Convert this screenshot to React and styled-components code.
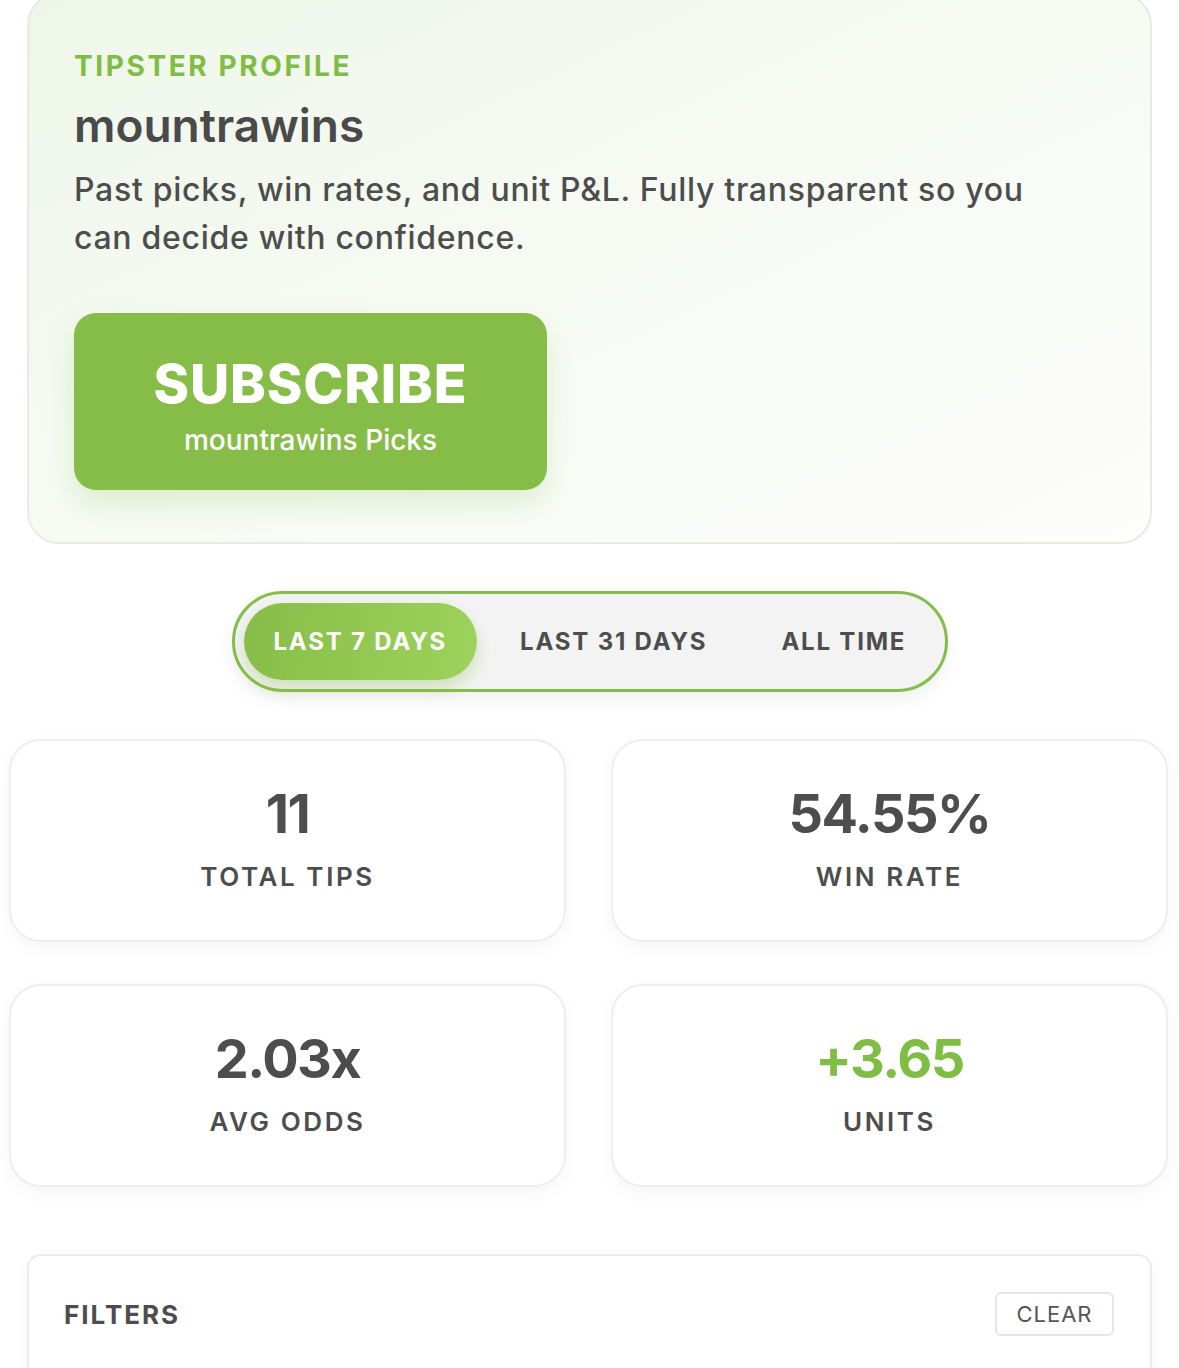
import React from "react";
import styled, { createGlobalStyle } from "styled-components";

const GlobalStyle = createGlobalStyle`
  * { box-sizing: border-box; }
  body {
    margin: 0;
    background: #ffffff;
    font-family: Inter, "Noto Sans", "Liberation Sans", sans-serif;
    color: #4b4b4b;
  }
`;

const Page = styled.main`
  width: 1179px;
  padding-bottom: 40px;
  overflow: hidden;
`;

const Hero = styled.section`
  margin: -7px 27px 0;
  padding: 54px 46px 52px 45px;
  border: 2px solid #e7ebe4;
  border-radius: 32px;
  background: linear-gradient(155deg, #eef6e8 0%, #f6faf3 45%, #fdfdfc 100%);
`;

const Eyebrow = styled.div`
  font-size: 28px;
  font-weight: 700;
  letter-spacing: 2.6px;
  color: #80bd45;
  line-height: 34px;
`;

const Name = styled.h1`
  margin: 12px 0 0;
  font-size: 46px;
  font-weight: 600;
  line-height: 60px;
  color: #4a4a4a;
`;

const Lead = styled.p`
  margin: 11px 0 0;
  font-size: 32px;
  font-weight: 500;
  line-height: 48px;
  letter-spacing: 0.7px;
  color: #4d4d4d;
  max-width: 990px;
`;

const SubscribeButton = styled.button`
  margin-top: 51px;
  width: 473px;
  height: 177px;
  border: none;
  border-radius: 22px;
  background: #86bd48;
  color: #fff;
  font-family: inherit;
  display: flex;
  flex-direction: column;
  align-items: center;
  justify-content: center;
  gap: 10px;
  padding: 6px 0 0;
  box-shadow: 0 14px 28px rgba(134, 189, 72, 0.22);
  cursor: pointer;
`;

const SubscribeTitle = styled.span`
  font-size: 54px;
  font-weight: 800;
  line-height: 60px;
  letter-spacing: 0.8px;
`;

const SubscribeSub = styled.span`
  font-size: 28px;
  font-weight: 500;
  line-height: 32px;
`;

const ToggleWrap = styled.div`
  display: flex;
  justify-content: center;
  margin-top: 47px;
`;

const Toggle = styled.div`
  width: 716px;
  height: 101px;
  border: 3px solid #86bd48;
  border-radius: 60px;
  background: #f3f3f3;
  padding: 9px;
  display: flex;
  align-items: center;
  box-shadow: 0 8px 18px rgba(0, 0, 0, 0.06);
`;

const ToggleOption = styled.button`
  height: 77px;
  border: none;
  border-radius: 40px;
  margin-right: ${(p) => (p.$active ? "6px" : "0")};
  padding: 0 ${(p) => (p.$active ? "30px" : "37px")};
  font-family: inherit;
  font-size: 24px;
  font-weight: 700;
  letter-spacing: 1.8px;
  color: ${(p) => (p.$active ? "#ffffff" : "#4d4d4d")};
  background: ${(p) =>
    p.$active ? "linear-gradient(100deg, #86bd48 0%, #9dd35c 100%)" : "transparent"};
  box-shadow: ${(p) => (p.$active ? "0 8px 16px rgba(120, 180, 60, 0.3)" : "none")};
  white-space: nowrap;
  cursor: pointer;
`;

const StatGrid = styled.div`
  margin: 47px 11px 0 9px;
  display: grid;
  grid-template-columns: 1fr 1fr;
  column-gap: 45px;
  row-gap: 42px;
`;

const StatCard = styled.div`
  height: 203px;
  border: 2px solid #eeeeee;
  border-radius: 32px;
  background: #fff;
  box-shadow: 0 6px 18px rgba(0, 0, 0, 0.04);
  display: flex;
  flex-direction: column;
  align-items: center;
  justify-content: center;
  gap: 17px;
  padding-bottom: 4px;
`;

const StatValue = styled.div`
  font-size: 54px;
  font-weight: 700;
  line-height: 60px;
  letter-spacing: -1.5px;
  color: ${(p) => (p.$positive ? "#80bd45" : "#4d4d4d")};
`;

const StatLabel = styled.div`
  font-size: 26px;
  font-weight: 600;
  letter-spacing: 2.6px;
  line-height: 32px;
  color: #4d4d4d;
`;

const FiltersCard = styled.section`
  margin: 67px 27px 0;
  height: 160px;
  border: 2px solid #ececec;
  border-radius: 14px;
  background: #fff;
  box-shadow: 0 4px 14px rgba(0, 0, 0, 0.04);
  padding: 36px 36px 0 35px;
`;

const FiltersHeader = styled.div`
  display: flex;
  align-items: center;
  justify-content: space-between;
`;

const FiltersTitle = styled.h2`
  margin: 0;
  font-size: 26px;
  font-weight: 700;
  letter-spacing: 2px;
  color: #4d4d4d;
`;

const ClearButton = styled.button`
  width: 119px;
  height: 44px;
  border: 2px solid #e6e6e6;
  border-radius: 6px;
  background: #fff;
  font-family: inherit;
  font-size: 22px;
  font-weight: 400;
  letter-spacing: 1px;
  color: #555;
  cursor: pointer;
`;

const stats = [
  { value: "11", label: "TOTAL TIPS" },
  { value: "54.55%", label: "WIN RATE" },
  { value: "2.03x", label: "AVG ODDS" },
  { value: "+3.65", label: "UNITS", positive: true },
];

export default function App() {
  return (
    <Page>
      <GlobalStyle />
      <Hero>
        <Eyebrow>TIPSTER PROFILE</Eyebrow>
        <Name>mountrawins</Name>
        <Lead>
          Past picks, win rates, and unit P&amp;L. Fully transparent so you can decide
          with confidence.
        </Lead>
        <SubscribeButton>
          <SubscribeTitle>SUBSCRIBE</SubscribeTitle>
          <SubscribeSub>mountrawins Picks</SubscribeSub>
        </SubscribeButton>
      </Hero>

      <ToggleWrap>
        <Toggle>
          <ToggleOption $active>LAST 7 DAYS</ToggleOption>
          <ToggleOption>LAST 31 DAYS</ToggleOption>
          <ToggleOption>ALL TIME</ToggleOption>
        </Toggle>
      </ToggleWrap>

      <StatGrid>
        {stats.map((s) => (
          <StatCard key={s.label}>
            <StatValue $positive={s.positive}>{s.value}</StatValue>
            <StatLabel>{s.label}</StatLabel>
          </StatCard>
        ))}
      </StatGrid>

      <FiltersCard>
        <FiltersHeader>
          <FiltersTitle>FILTERS</FiltersTitle>
          <ClearButton>CLEAR</ClearButton>
        </FiltersHeader>
      </FiltersCard>
    </Page>
  );
}
